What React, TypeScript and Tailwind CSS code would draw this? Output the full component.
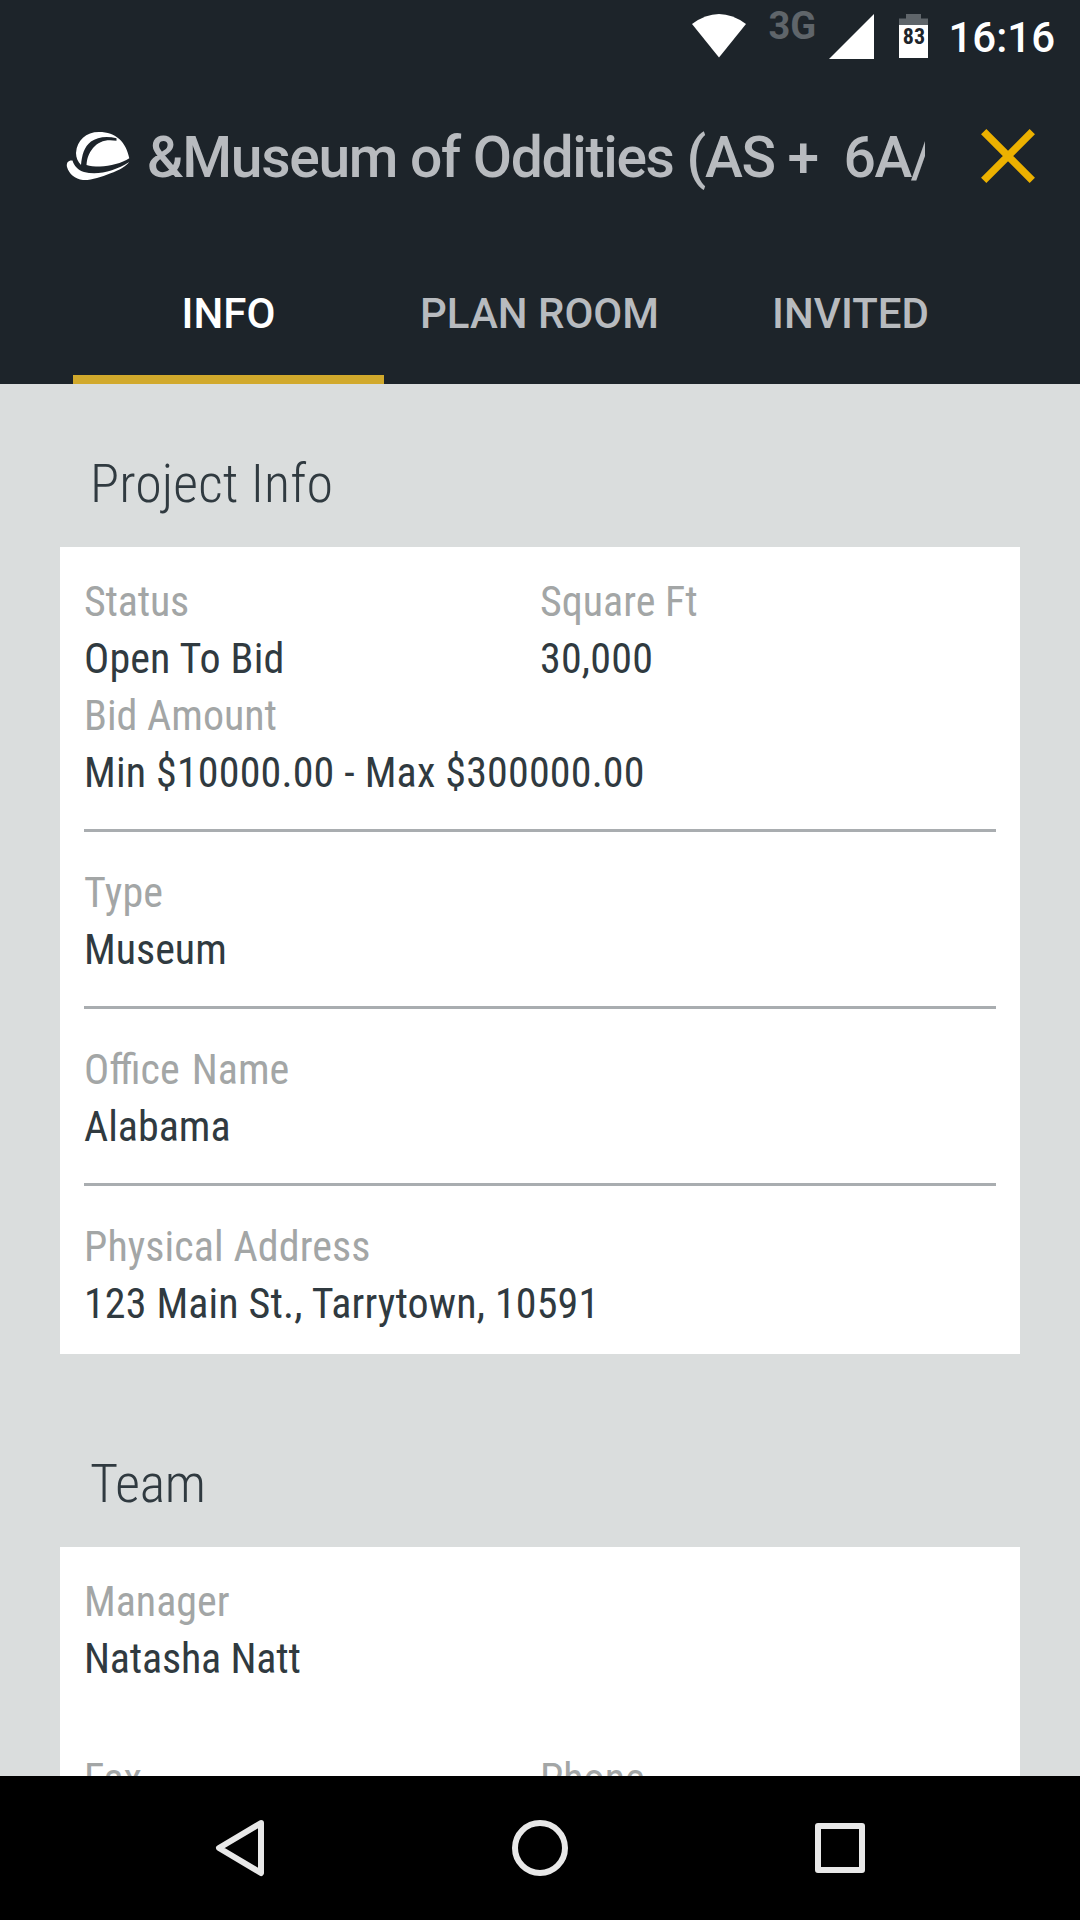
const tabs = ["INFO", "PLAN ROOM", "INVITED"];

type FieldProps = { label: string; value?: string; labelClass?: string; valueClass?: string };

function Field({ label, value, labelClass = "", valueClass = "" }: FieldProps) {
  return (
    <div className="text-[42px] leading-[57px] whitespace-nowrap">
      <div className={`text-[#a3a6a6] ${labelClass}`}>{label}</div>
      {value && <div className={`text-[#303a40] ${valueClass}`}>{value}</div>}
    </div>
  );
}

function Divider() {
  return <div className="mt-[28px] mb-[32px] h-[3px] bg-[#a9adb0]" />;
}

function StatusBar() {
  return (
    <div className="flex h-[72px] justify-end pr-[25px]">
      <svg className="mt-[14px] h-[44px] w-[54px]" viewBox="0 0 54 44" fill="#fff">
        <path d="M0 10Q27 -10 54 10L27 43.5Z" />
      </svg>
      <span className="ml-[22px] mt-[4px] w-[48px] text-[38px] leading-[44px] font-bold text-[#5f656a]">3G</span>
      <svg className="ml-[13px] mt-[14px] h-[45px] w-[45px]" viewBox="0 0 45 45" fill="#fff">
        <path d="M45 0V45H0Z" />
      </svg>
      <div className="relative ml-[25px] mt-[14px] h-[44px] w-[29px]">
        <svg className="h-[44px] w-[29px]" viewBox="0 0 29 44">
          <path d="M7 0H22V4.500H29V11H0V4.500H7Z" fill="#5f656a" />
          <path d="M0 11H29V44H0Z" fill="#fff" />
        </svg>
        <span className="absolute inset-x-0 top-[10px] text-center font-['Roboto_Condensed','Roboto',sans-serif] text-[22px] leading-[26px] font-bold text-[#1d242a] [font-stretch:75%]">
          83
        </span>
      </div>
      <span className="ml-[20px] mt-[13px] text-[42px] leading-[50px] font-medium text-white">16:16</span>
    </div>
  );
}

function Header() {
  return (
    <header className="h-[384px] bg-[#1d242a]">
      <StatusBar />
      <div className="flex h-[168px] items-center pl-[66px]">
        <svg className="h-[50px] w-[64px] shrink-0" viewBox="0 0 64 50" fill="#fff">
          <path d="M15 34C12 31 10 27 10 22C11 9 20 1 33 1C50 1 60 11 63.300 27.300C56 32 44 35.500 34 35.500C28 35.500 24 35 20.500 34C21 27 23 22 27 17C33 10 40 8 50.500 9.700L50.500 7.300C41 4.500 31 6 25 10.500C18 16 16 24 15 34Z" />
          <path d="M6.500 29.500C8 35 12 39 18 41C32 44.500 49 40 63.300 31C60 35 54 39 44 42.500C35 46 25 49.500 17 49C9 48 3 43 1 36C0 31 3 29 6.500 29.500Z" />
        </svg>
        <h1 className="ml-[17px] w-[778px] overflow-hidden pt-[4px] text-[57px] leading-[72px] font-medium tracking-[-1.31px] whitespace-pre text-[#b8bbbf]">
          &amp;Museum of Oddities (AS +  6A/B)
        </h1>
        <svg className="ml-[56px] h-[54px] w-[54px] shrink-0" viewBox="0 0 54 54" stroke="#ecb100" strokeWidth="7.500">
          <path d="M2.700 2.700L51.300 51.300M51.300 2.700L2.700 51.300" />
        </svg>
      </div>
      <nav className="flex pl-[73px]">
        {tabs.map((tab, i) => (
          <div
            key={tab}
            className={`flex h-[144px] w-[311px] items-center justify-center border-b-[9px] pt-[11px] text-[42px] font-medium ${
              i === 0 ? "border-[#d1a92c] text-white" : "border-transparent text-[#b8bbbf]"
            }`}
          >
            {tab}
          </div>
        ))}
      </nav>
    </header>
  );
}

function NavBar() {
  return (
    <footer className="flex h-[144px] shrink-0 items-center bg-black px-[90px]">
      <svg className="h-[144px] w-[900px]" viewBox="90 0 900 144" fill="none" stroke="#e8e8e8" strokeWidth="6" strokeLinejoin="round">
        <path d="M261 47L219 72L261 97Z" />
        <circle cx="540" cy="72" r="25" />
        <rect x="818" y="50" width="44" height="44" />
      </svg>
    </footer>
  );
}

export default function App() {
  return (
    <div className="flex h-[1920px] w-[1080px] flex-col overflow-hidden bg-[#dadddd] font-['Roboto',sans-serif]">
      <Header />
      <main className="h-[1392px] overflow-hidden px-[60px] font-['Roboto_Condensed','Roboto',sans-serif] [font-stretch:75%]">
        <h2 className="h-[163px] pt-[68px] pl-[30px] text-[54px] leading-[64px] font-light tracking-[0.1px] text-[#303a40]">Project Info</h2>
        <section className="h-[807px] bg-white px-[24px] pt-[26px]">
          <div className="grid grid-cols-2">
            <Field label="Status" value="Open To Bid" labelClass="tracking-[-0.2px]" valueClass="tracking-[0.15px]" />
            <Field label="Square Ft" value="30,000" valueClass="tracking-[0.2px]" />
          </div>
          <Field label="Bid Amount" value="Min $10000.00 - Max $300000.00" valueClass="tracking-[0.17px]" />
          <Divider />
          <Field label="Type" value="Museum" labelClass="tracking-[0.25px]" />
          <Divider />
          <Field label="Office Name" value="Alabama" labelClass="[word-spacing:2.5px]" />
          <Divider />
          <Field
            label="Physical Address"
            value="123 Main St., Tarrytown, 10591"
            labelClass="tracking-[0.1px]"
            valueClass="tracking-[0.14px]"
          />
        </section>
        <h2 className="h-[193px] pt-[98px] pl-[30px] text-[54px] leading-[64px] font-light tracking-[-0.3px] text-[#303a40]">Team</h2>
        <section className="h-[400px] bg-white px-[24px] pt-[26px]">
          <Field label="Manager" value="Natasha Natt" valueClass="tracking-[-0.18px]" />
          <div className="mt-[63px] grid grid-cols-2">
            <Field label="Fax" />
            <Field label="Phone" />
          </div>
        </section>
      </main>
      <NavBar />
    </div>
  );
}
